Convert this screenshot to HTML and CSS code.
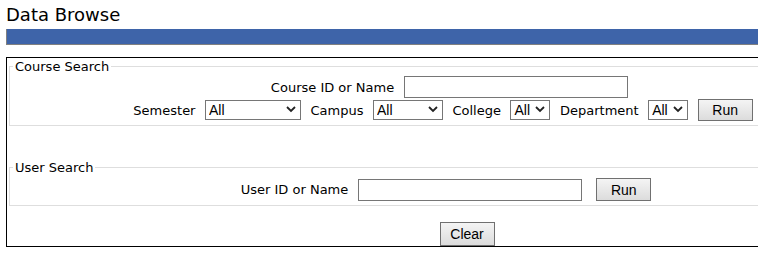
FILE: index.html
```html
<!DOCTYPE html>
<html lang="en">
<head>
    <meta charset="UTF-8">
    <meta name="viewport" content="width=device-width, initial-scale=1.0">
    <title>Data Browse</title>
    <link rel="stylesheet" href="styles.css">
</head>
<body>

<h1 class="page-title">Data Browse</h1>
<div class="title-bar"></div>

<div class="browse-box">
    <!-- Course search -->
    <fieldset class="search-set course-set">
        <legend>Course Search</legend>
        <div class="search-row name-row">
            <label for="course-name">Course ID or Name</label>
            <input type="text" id="course-name" class="text-box">
        </div>
        <div class="search-row filter-row">
            <label for="semester">Semester</label>
            <span class="drop">
                <select id="semester" class="drop-list semester-list"><option>All</option></select>
                <svg class="drop-arrow" width="10" height="7" viewBox="0 0 10 7"><path d="M1 1 L5 5 L9 1" fill="none" stroke="#222" stroke-width="1.8"/></svg>
            </span>
            <label for="campus">Campus</label>
            <span class="drop">
                <select id="campus" class="drop-list campus-list"><option>All</option></select>
                <svg class="drop-arrow" width="10" height="7" viewBox="0 0 10 7"><path d="M1 1 L5 5 L9 1" fill="none" stroke="#222" stroke-width="1.8"/></svg>
            </span>
            <label for="college">College</label>
            <span class="drop">
                <select id="college" class="drop-list small-list"><option>All</option></select>
                <svg class="drop-arrow" width="10" height="7" viewBox="0 0 10 7"><path d="M1 1 L5 5 L9 1" fill="none" stroke="#222" stroke-width="1.8"/></svg>
            </span>
            <label for="department">Department</label>
            <span class="drop">
                <select id="department" class="drop-list small-list"><option>All</option></select>
                <svg class="drop-arrow" width="10" height="7" viewBox="0 0 10 7"><path d="M1 1 L5 5 L9 1" fill="none" stroke="#222" stroke-width="1.8"/></svg>
            </span>
            <button type="button" class="run-btn">Run</button>
        </div>
    </fieldset>

    <!-- User search -->
    <fieldset class="search-set user-set">
        <legend>User Search</legend>
        <div class="search-row user-row">
            <label for="user-name">User ID or Name</label>
            <input type="text" id="user-name" class="text-box">
            <button type="button" class="run-btn user-run">Run</button>
        </div>
    </fieldset>

    <div class="clear-row">
        <button type="button" class="run-btn clear-btn">Clear</button>
    </div>
</div>

</body>
</html>
```

FILE: styles.css
```css
* {
    box-sizing: border-box;
}

html, body {
    overflow: hidden;
}

body {
    margin: 0;
    padding: 4px 0 0 6px;
    font-family: "DejaVu Sans", Verdana, sans-serif;
    font-size: 13px;
    color: #000;
    background: #fff;
}

.page-title {
    margin: 0;
    font-size: 18px;
    font-weight: normal;
    line-height: 21px;
}

.title-bar {
    width: 1000px;
    height: 16px;
    margin-top: 4px;
    background: #3e64a9;
    border-left: 1px solid #808080;
    border-bottom: 1px solid #808080;
}

.browse-box {
    width: 922px;
    margin-top: 12px;
    border: 1px solid #000;
}

.search-set {
    width: 868px;
    margin: 0 2px;
    padding: 1px 0 4px;
    border: 1px solid #dedede;
    min-width: 0;
}

.search-set legend {
    margin-left: 3px;
    padding: 0 2px;
    line-height: 17px;
}

.user-set {
    margin-top: 33px;
    padding-top: 2px;
}

.search-row {
    display: flex;
    align-items: center;
    justify-content: center;
    gap: 10px;
}

.name-row {
    padding-left: 13px;
    margin-bottom: 1px;
}

.filter-row {
    gap: 9.5px;
}

.user-row {
    padding-left: 6px;
}

.text-box {
    width: 224px;
    height: 22px;
    margin: 0;
    border: 1px solid #767676;
    font-family: "Liberation Sans", Arial, sans-serif;
    font-size: 14px;
}

.drop {
    position: relative;
    display: inline-flex;
}

.drop-list {
    appearance: none;
    -webkit-appearance: none;
    height: 20px;
    margin: 0;
    padding: 0 0 0 3px;
    border: 1px solid #767676;
    border-radius: 0;
    background: #fff;
    font-family: "Liberation Sans", Arial, sans-serif;
    font-size: 14px;
    color: #000;
}

.semester-list { width: 96px; }
.campus-list { width: 70px; }
.small-list { width: 40px; }

.drop-arrow {
    position: absolute;
    right: 5px;
    top: 6px;
    pointer-events: none;
}

.run-btn {
    width: 55px;
    height: 22px;
    margin: 0;
    padding: 0;
    border: 1px solid #707070;
    border-radius: 0;
    background: linear-gradient(#f4f4f4, #dcdcdc);
    font-family: "Liberation Sans", Arial, sans-serif;
    font-size: 14px;
    color: #000;
}

.user-run {
    height: 23px;
    margin-left: 4px;
}

.clear-row {
    display: flex;
    justify-content: center;
    margin-top: 16px;
}

.clear-btn {
    height: 24px;
}
```
